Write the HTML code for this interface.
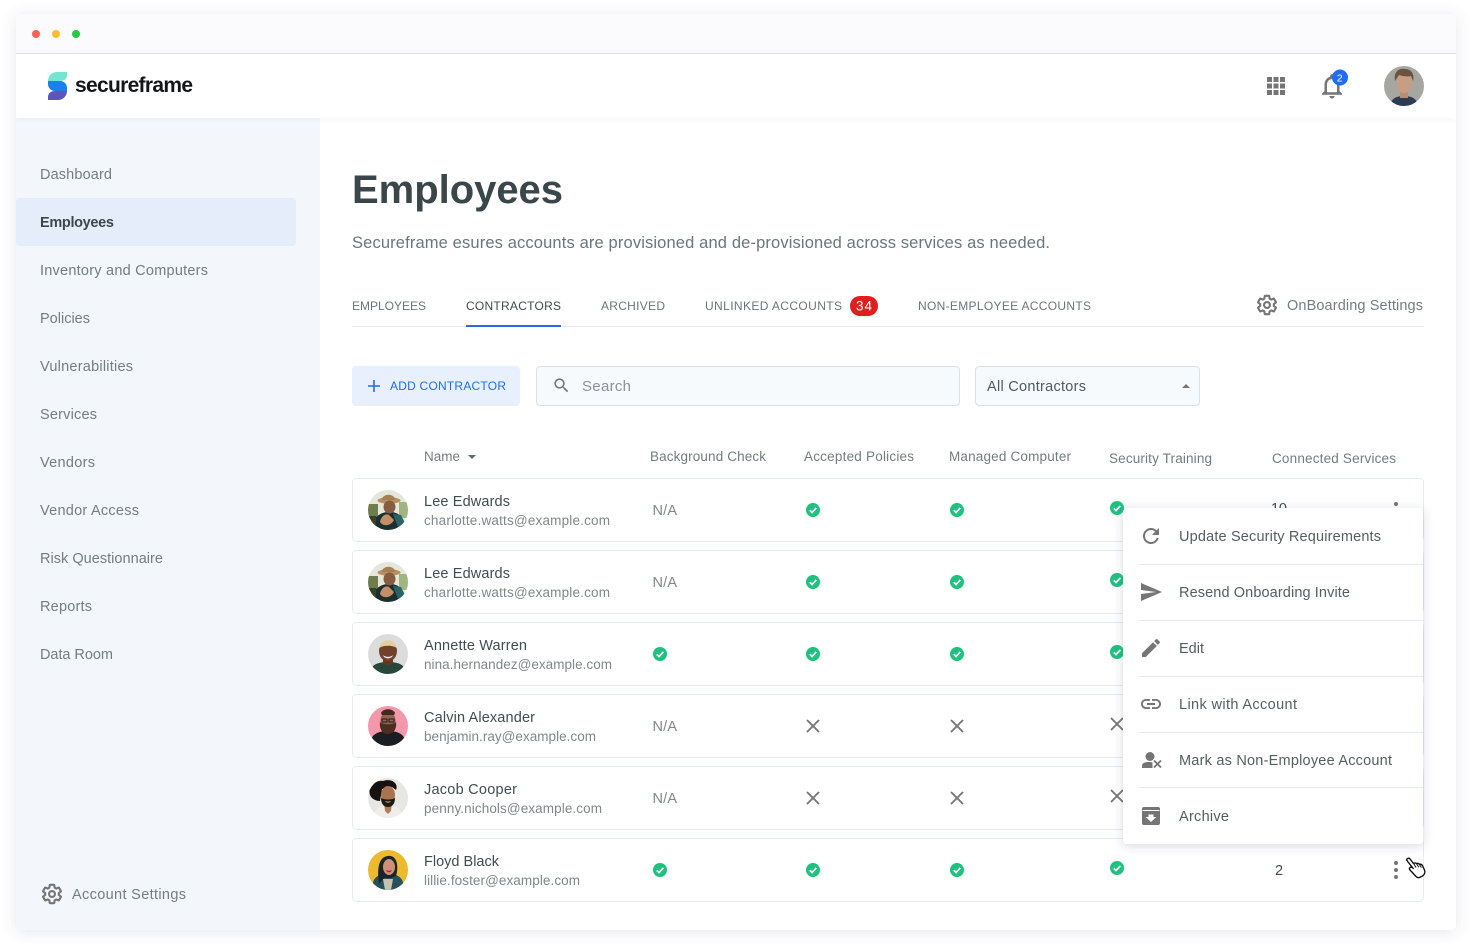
<!DOCTYPE html>
<html lang="en"><head><meta charset="utf-8"><title>Secureframe Employees</title>
<style>
html,body{margin:0;padding:0;background:#fff;width:1472px;height:948px;overflow:hidden}
svg{display:block}
text{font-family:"Liberation Sans",sans-serif}
.nav{font-size:14.5px;fill:#747d80}
.tab{font-size:12px;fill:#6b7578}
.th{font-size:13.5px;fill:#737c7f}
.nm{font-size:14.5px;fill:#414c4f}
.em{font-size:13.5px;fill:#7f878a}
.na{font-size:14.5px;fill:#7f878a}
.mi{font-size:14.5px;fill:#535e61}
.ic{fill:#757575}
</style></head><body>
<svg width="1472" height="948" viewBox="0 0 1472 948" xmlns="http://www.w3.org/2000/svg">
<defs>
<filter id="ws" x="-5%" y="-5%" width="110%" height="110%"><feDropShadow dx="0" dy="2" stdDeviation="7" flood-color="#5a6a90" flood-opacity=".16"/></filter>
<filter id="ps" x="-15%" y="-15%" width="130%" height="130%"><feDropShadow dx="0" dy="2" stdDeviation="5" flood-color="#3a4660" flood-opacity=".2"/></filter>
<filter id="hs" x="-5%" y="-50%" width="110%" height="200%"><feDropShadow dx="0" dy="1" stdDeviation="3" flood-color="#5a6a90" flood-opacity=".07"/></filter>
<clipPath id="av"><circle cx="0" cy="0" r="20"/></clipPath>
<clipPath id="win"><rect x="16" y="14" width="1440" height="916" rx="5"/></clipPath>
<symbol id="chk" viewBox="0 0 14 14" overflow="visible"><circle cx="7" cy="7" r="7" fill="#1ec27f"/><path d="M3.700 7.300l2.300 2.200 4.400-4.600" fill="none" stroke="#fff" stroke-width="1.700"/></symbol>
<symbol id="xx" viewBox="0 0 14 14"><path d="M1 1l12 12M13 1L1 13" stroke="#757575" stroke-width="1.900" fill="none"/></symbol>
<symbol id="gear" viewBox="0 0 24 24"><path d="M19.430 12.980c.04-.32.07-.64.07-.98 0-.34-.03-.66-.07-.98l2.110-1.650c.19-.15.24-.42.12-.64l-2-3.460c-.12-.22-.39-.3-.61-.22l-2.490 1c-.52-.4-1.080-.73-1.690-.98l-.38-2.650C14.460 2.180 14.250 2 14 2h-4c-.25 0-.46.18-.49.42l-.38 2.650c-.61.25-1.170.59-1.690.98l-2.490-1c-.23-.09-.49 0-.61.22l-2 3.460c-.13.22-.07.49.12.64l2.110 1.650c-.04.32-.07.65-.07.98 0 .33.03.66.07.98l-2.110 1.650c-.19.15-.24.42-.12.64l2 3.460c.12.22.39.3.61.22l2.490-1c.52.4 1.080.73 1.690.98l.38 2.650c.03.24.24.42.49.42h4c.25 0 .46-.18.49-.42l.38-2.650c.61-.25 1.170-.59 1.690-.98l2.490 1c.23.09.49 0 .61-.22l2-3.460c.12-.22.07-.49-.12-.64l-2.110-1.650z" fill="none" stroke="#757575" stroke-width="2.300"/><circle cx="12" cy="12" r="3.200" fill="none" stroke="#757575" stroke-width="2.300"/></symbol>
<g id="a1" clip-path="url(#av)"><rect x="-20" y="-20" width="40" height="40" fill="#e4e7da"/><rect x="-20" y="-6" width="10" height="20" fill="#6f7d4c"/><rect x="11" y="-8" width="9" height="16" fill="#9fb681"/><path d="M-16 20c0-12 7-17 15-18 10-1 18 4 19 18z" fill="#1b2e30"/><path d="M5 4l8 1 4 9-7 3z" fill="#2b6268"/><ellipse cx="1" cy="-9.500" rx="11.500" ry="3.200" fill="#b68f62"/><path d="M-6-10c0-7 13-7 13 0z" fill="#a87f52"/><ellipse cx="1.500" cy="-3" rx="6" ry="6.500" fill="#875c40"/><path d="M-8 12c1-6 6-9 9-7l5 5c-3 6-11 7-14 2z" fill="#c48f66"/><path d="M-19 6h7v14h-7z" fill="#3a3f2c"/></g>
<g id="a2" clip-path="url(#av)"><rect x="-20" y="-20" width="40" height="40" fill="#dcdcdc"/><path d="M-18 20c0-9 7-12 18-12s18 3 18 12z" fill="#28473a"/><path d="M-5 2h10v7c-3 3-7 3-10 0z" fill="#62361f"/><ellipse cx="0" cy="-3" rx="9" ry="10.500" fill="#71412a"/><path d="M-8.500-6c0-10 17-10 17 0-3-3-14-3-17 0z" fill="#e4cf9f"/><path d="M-5 1c2 2.500 8 2.500 10 0-1 4.500-9 4.500-10 0z" fill="#fff"/></g>
<g id="a3" clip-path="url(#av)"><rect x="-20" y="-20" width="40" height="40" fill="#f597aa"/><path d="M-18 20c0-12 8-15 18-15s18 3 18 15z" fill="#1c1d22"/><ellipse cx="0" cy="-5" rx="7.500" ry="10" fill="#96644d"/><path d="M-8-4c2 3 14 3 16 0 1 6-2 12-8 12s-9-6-8-12z" fill="#4b2e22"/><path d="M-7-13c2-5 12-5 14 0l-1 2H-6z" fill="#3f2a20"/><path d="M-6-7h5v3h-5zM1-7h5v3H1z" fill="none" stroke="#1c1d22" stroke-width="1"/></g>
<g id="a4" clip-path="url(#av)"><rect x="-20" y="-20" width="40" height="40" fill="#e6e6e3"/><path d="M-14 20c0-10 6-12 14-12s14 2 14 12z" fill="#f1eee9"/><path d="M-4 5h8l-1 8-3 3-3-3z" fill="#b07d5e"/><path d="M-18-3c-3-10 7-15 13-14 8-3 16 2 13 9l-4-3-10 2-2 12c-5 0-9-3-10-6z" fill="#17120f"/><ellipse cx="0" cy="-3" rx="7" ry="9" fill="#a9734f"/><path d="M-7 0c3 2 11 2 14 0 0 6-3 9-7 9s-7-3-7-9z" fill="#241812"/><path d="M-3 3c2 1 4 1 6 0-1 2-5 2-6 0z" fill="#fff"/></g>
<g id="a5" clip-path="url(#av)"><rect x="-20" y="-20" width="40" height="40" fill="#edb92f"/><path d="M-16 20c0-12 5-16 16-16s16 4 16 16z" fill="#26505e"/><path d="M-9 14c-2-14-1-27 9-28 9-1 11 10 8 20l-5 2H-4z" fill="#1b2429"/><ellipse cx="1" cy="-3" rx="6" ry="8" fill="#cd8f76"/><path d="M-2 0c2 1 4 1 6 0-1 3-5 3-6 0z" fill="#a8242f"/><path d="M-5 9h10l-2 11h-6z" fill="#c7c3b3"/></g>
</defs>

<rect x="16" y="14" width="1440" height="916" rx="5" fill="#fff" filter="url(#ws)"/>
<g clip-path="url(#win)">
<rect x="16" y="14" width="1440" height="39" fill="#fbfbfe"/>
<rect x="16" y="53" width="1440" height="1" fill="#e4e4f1"/>
<rect x="16" y="118" width="304" height="812" fill="#f3f6fb"/>
<rect x="16" y="54" width="1440" height="64" fill="#fff" filter="url(#hs)"/>
</g>
<circle cx="36" cy="34" r="4" fill="#ff5f57"/><circle cx="56" cy="34" r="4" fill="#ffbd2e"/><circle cx="76" cy="34" r="4" fill="#28c940"/>

<path d="M67 72v3c0 4-3 6-7 6H48c0-5 4-9 9-9z" fill="#72e6d2"/>
<path d="M48 81h12c4 0 7 3 7 7v3H55c-4 0-7-3-7-7z" fill="#1c80e9"/>
<path d="M48 100v-3c0-4 3-6 7-6h12c0 5-4 9-9 9z" fill="#5b55bc"/>
<text x="75" y="92" font-size="21" font-weight="700" fill="#14171a" textLength="118">secureframe</text>

<g fill="#757575"><rect x="1267" y="77" width="5" height="5"/><rect x="1273.500" y="77" width="5" height="5"/><rect x="1280" y="77" width="5" height="5"/><rect x="1267" y="83.500" width="5" height="5"/><rect x="1273.500" y="83.500" width="5" height="5"/><rect x="1280" y="83.500" width="5" height="5"/><rect x="1267" y="90" width="5" height="5"/><rect x="1273.500" y="90" width="5" height="5"/><rect x="1280" y="90" width="5" height="5"/></g>
<svg x="1317" y="71" width="30" height="30" viewBox="0 0 24 24"><path class="ic" d="M12 22c1.100 0 2-.9 2-2h-4c0 1.100.9 2 2 2zm6-6v-5c0-3.070-1.630-5.640-4.500-6.320V4c0-.83-.67-1.500-1.500-1.500s-1.500.67-1.500 1.500v.68C7.640 5.360 6 7.920 6 11v5l-2 2v1h16v-1l-2-2zm-2 1H8v-6c0-2.480 1.510-4.500 4-4.500s4 2.020 4 4.500v6z"/></svg>
<circle cx="1340" cy="77.500" r="8" fill="#1f6cf2"/>
<text x="1336.800" y="81.500" font-size="10.500" fill="#fff" textLength="6.500">2</text>
<g transform="translate(1404 86)"><g clip-path="url(#av)"><rect x="-20" y="-20" width="40" height="40" fill="#a7a7a2"/><path d="M-14 20c1-8 7-10 14-10s13 2 14 10z" fill="#2c3c52"/><rect x="-4" y="3" width="8" height="9" fill="#b98c74"/><ellipse cx="0" cy="-3" rx="7.500" ry="10" fill="#c99c84"/><path d="M-9-5c-2-11 6-13 10-12 6 0 10 5 8 12l-2-5c-4 1-9 0-12-1z" fill="#6b5341"/></g></g>

<text class="nav" x="40" y="179" textLength="72">Dashboard</text>
<rect x="16" y="198" width="280" height="48" rx="3" fill="#e6edfa"/>
<text x="40" y="227" font-size="14.500" font-weight="700" fill="#3c474a" textLength="74">Employees</text>
<text class="nav" x="40" y="275" textLength="168">Inventory and Computers</text>
<text class="nav" x="40" y="323" textLength="50">Policies</text>
<text class="nav" x="40" y="371" textLength="93">Vulnerabilities</text>
<text class="nav" x="40" y="419" textLength="57">Services</text>
<text class="nav" x="40" y="467" textLength="55">Vendors</text>
<text class="nav" x="40" y="515" textLength="99">Vendor Access</text>
<text class="nav" x="40" y="563" textLength="123">Risk Questionnaire</text>
<text class="nav" x="40" y="611" textLength="52">Reports</text>
<text class="nav" x="40" y="659" textLength="73">Data Room</text>
<text class="nav" x="72" y="899" textLength="114">Account Settings</text>
<use href="#gear" x="41" y="883" width="22" height="22"/>

<text x="352" y="203" font-size="40" font-weight="700" fill="#3a4649" textLength="211">Employees</text>
<text x="352" y="248" font-size="16.500" fill="#6c767a" textLength="698">Secureframe esures accounts are provisioned and de-provisioned across services as needed.</text>

<rect x="352" y="326" width="1072" height="1" fill="#e5ebf6"/>
<text class="tab" x="352" y="310" textLength="74">EMPLOYEES</text>
<text class="tab" x="466" y="310" style="fill:#3f4a4d" textLength="95">CONTRACTORS</text>
<rect x="466" y="325" width="95" height="2" fill="#1f6cf2"/>
<text class="tab" x="601" y="310" textLength="64">ARCHIVED</text>
<text class="tab" x="705" y="310" textLength="137">UNLINKED ACCOUNTS</text>
<rect x="850" y="296" width="28" height="20" rx="10" fill="#e01e1e"/>
<text x="856" y="310.500" font-size="13.500" fill="#fff" textLength="16">34</text>
<text class="tab" x="918" y="310" textLength="173">NON-EMPLOYEE ACCOUNTS</text>
<use href="#gear" x="1256" y="294" width="22" height="22"/>
<text class="nav" x="1287" y="310" textLength="136">OnBoarding Settings</text>

<rect x="352" y="366" width="168" height="40" rx="4" fill="#e9f0fd"/>
<path d="M368 386h12M374 380v12" stroke="#1f6cf2" stroke-width="1.600"/>
<text x="390" y="390" font-size="12" fill="#1f6cf2" textLength="116">ADD CONTRACTOR</text>
<rect x="536.500" y="366.500" width="423" height="39" rx="3.500" fill="#f7fafc" stroke="#d9e0ea"/>
<svg x="552" y="376" width="19" height="19" viewBox="0 0 24 24"><path class="ic" d="M15.500 14h-.79l-.28-.27C15.410 12.590 16 11.110 16 9.500 16 5.910 13.090 3 9.500 3S3 5.910 3 9.500 5.910 16 9.500 16c1.610 0 3.090-.59 4.230-1.570l.27.28v.79l5 4.990L20.490 19l-4.990-5zm-6 0C7.010 14 5 11.990 5 9.500S7.010 5 9.500 5 14 7.010 14 9.500 11.990 14 9.500 14z"/></svg>
<text x="582" y="391" font-size="15" fill="#8b9396" textLength="49">Search</text>
<rect x="975.500" y="366.500" width="224" height="39" rx="3.500" fill="#f7fafc" stroke="#d9e0ea"/>
<text x="987" y="391" font-size="14.500" fill="#4f5a5d" textLength="99">All Contractors</text>
<path d="M1182 388l4-4 4 4z" fill="#757575"/>

<text class="th" x="424" y="461" textLength="36">Name</text>
<path d="M468 455h8l-4 4z" fill="#606a6d"/>
<text class="th" x="650" y="461" textLength="116">Background Check</text>
<text class="th" x="804" y="461" textLength="110">Accepted Policies</text>
<text class="th" x="949" y="461" textLength="122">Managed Computer</text>
<text class="th" x="1109" y="463" textLength="103">Security Training</text>
<text class="th" x="1272" y="463" textLength="124">Connected Services</text>

<g fill="#fff" stroke="#e5ebf5">
<rect x="352.500" y="478.500" width="1071" height="63" rx="4"/>
<rect x="352.500" y="550.500" width="1071" height="63" rx="4"/>
<rect x="352.500" y="622.500" width="1071" height="63" rx="4"/>
<rect x="352.500" y="694.500" width="1071" height="63" rx="4"/>
<rect x="352.500" y="766.500" width="1071" height="63" rx="4"/>
<rect x="352.500" y="838.500" width="1071" height="63" rx="4"/>
</g>

<use href="#a1" transform="translate(388 510)"/>
<use href="#a1" transform="translate(388 582)"/>
<use href="#a2" transform="translate(388 654)"/>
<use href="#a3" transform="translate(388 726)"/>
<use href="#a4" transform="translate(388 798)"/>
<use href="#a5" transform="translate(388 870)"/>

<text class="nm" x="424" y="506" textLength="86">Lee Edwards</text>
<text class="em" x="424" y="525" textLength="186">charlotte.watts@example.com</text>
<text class="nm" x="424" y="578" textLength="86">Lee Edwards</text>
<text class="em" x="424" y="597" textLength="186">charlotte.watts@example.com</text>
<text class="nm" x="424" y="650" textLength="103">Annette Warren</text>
<text class="em" x="424" y="669" textLength="188">nina.hernandez@example.com</text>
<text class="nm" x="424" y="722" textLength="111">Calvin Alexander</text>
<text class="em" x="424" y="741" textLength="172">benjamin.ray@example.com</text>
<text class="nm" x="424" y="794" textLength="93">Jacob Cooper</text>
<text class="em" x="424" y="813" textLength="178">penny.nichols@example.com</text>
<text class="nm" x="424" y="866" textLength="75">Floyd Black</text>
<text class="em" x="424" y="885" textLength="156">lillie.foster@example.com</text>

<text class="na" x="652.500" y="515" textLength="24.500">N/A</text>
<text class="na" x="652.500" y="587" textLength="24.500">N/A</text>
<use href="#chk" x="653" y="647" width="14" height="14"/>
<text class="na" x="652.500" y="731" textLength="24.500">N/A</text>
<text class="na" x="652.500" y="803" textLength="24.500">N/A</text>
<use href="#chk" x="653" y="863" width="14" height="14"/>

<use href="#chk" x="806" y="503" width="14" height="14"/><use href="#chk" x="950" y="503" width="14" height="14"/><use href="#chk" x="1110" y="501" width="14" height="14"/>
<use href="#chk" x="806" y="575" width="14" height="14"/><use href="#chk" x="950" y="575" width="14" height="14"/><use href="#chk" x="1110" y="573" width="14" height="14"/>
<use href="#chk" x="806" y="647" width="14" height="14"/><use href="#chk" x="950" y="647" width="14" height="14"/><use href="#chk" x="1110" y="645" width="14" height="14"/>
<use href="#xx" x="806" y="719" width="14" height="14"/><use href="#xx" x="950" y="719" width="14" height="14"/><use href="#xx" x="1110" y="717" width="14" height="14"/>
<use href="#xx" x="806" y="791" width="14" height="14"/><use href="#xx" x="950" y="791" width="14" height="14"/><use href="#xx" x="1110" y="789" width="14" height="14"/>
<use href="#chk" x="806" y="863" width="14" height="14"/><use href="#chk" x="950" y="863" width="14" height="14"/><use href="#chk" x="1110" y="861" width="14" height="14"/>

<text class="nm" x="1271" y="513" textLength="16">10</text>
<circle cx="1396" cy="504" r="2" fill="#757575"/>
<text class="nm" x="1275" y="875" textLength="8.500">2</text>
<circle cx="1396" cy="863" r="2" fill="#757575"/><circle cx="1396" cy="870" r="2" fill="#757575"/><circle cx="1396" cy="877" r="2" fill="#757575"/>

<rect x="1123" y="508" width="300" height="336" rx="4" fill="#fff" filter="url(#ps)"/>
<g fill="#e5ebf6"><rect x="1139" y="564" width="284" height="1"/><rect x="1139" y="620" width="284" height="1"/><rect x="1139" y="676" width="284" height="1"/><rect x="1139" y="732" width="284" height="1"/><rect x="1139" y="787" width="284" height="1"/></g>
<text class="mi" x="1179" y="541" textLength="202">Update Security Requirements</text>
<text class="mi" x="1179" y="597" textLength="171">Resend Onboarding Invite</text>
<text class="mi" x="1179" y="653" textLength="25">Edit</text>
<text class="mi" x="1179" y="709" textLength="118">Link with Account</text>
<text class="mi" x="1179" y="765" textLength="213">Mark as Non-Employee Account</text>
<text class="mi" x="1179" y="821" textLength="50">Archive</text>

<svg x="1139" y="524" width="24" height="24" viewBox="0 0 24 24"><path class="ic" d="M17.650 6.350C16.200 4.900 14.210 4 12 4c-4.420 0-7.990 3.580-7.990 8s3.570 8 7.990 8c3.730 0 6.840-2.550 7.730-6h-2.080c-.82 2.330-3.040 4-5.650 4-3.310 0-6-2.690-6-6s2.690-6 6-6c1.660 0 3.140.69 4.220 1.780L13 11h7V4l-2.350 2.350z"/></svg>
<svg x="1139" y="580" width="24" height="24" viewBox="0 0 24 24"><path class="ic" d="M2.010 21L23 12 2.010 3 2 10l15 2-15 2z"/></svg>
<svg x="1139" y="636" width="24" height="24" viewBox="0 0 24 24"><path class="ic" d="M3 17.250V21h3.750L17.810 9.940l-3.750-3.750L3 17.250zM20.710 7.040c.39-.39.39-1.020 0-1.410l-2.340-2.340c-.39-.39-1.020-.39-1.410 0l-1.830 1.830 3.750 3.750 1.830-1.830z"/></svg>
<svg x="1139" y="692" width="24" height="24" viewBox="0 0 24 24"><path class="ic" d="M3.900 12c0-1.710 1.390-3.100 3.100-3.100h4V7H7c-2.760 0-5 2.240-5 5s2.240 5 5 5h4v-1.900H7c-1.710 0-3.100-1.390-3.100-3.100zM8 13h8v-2H8v2zm9-6h-4v1.900h4c1.710 0 3.100 1.390 3.100 3.100s-1.390 3.100-3.100 3.100h-4V17h4c2.760 0 5-2.240 5-5s-2.240-5-5-5z"/></svg>
<circle cx="1150" cy="756.500" r="4.500" fill="#757575"/><path d="M1142 768v-2.500c0-2.500 3-3.500 7-3.500 1.500 0 2.500.2 3.500.5v5.500z" fill="#757575"/><path d="M1154 760.500l7 7M1161 760.500l-7 7" stroke="#757575" stroke-width="1.800"/>
<path class="ic" d="M1144 807h14a2 2 0 0 1 2 2v14a2 2 0 0 1-2 2h-14a2 2 0 0 1-2-2v-14a2 2 0 0 1 2-2z"/>
<path d="M1142.500 810.500h17" stroke="#fff" stroke-width="1"/>
<path d="M1148.500 814.500h5v2.500h2.800l-5.300 5-5.300-5h2.800z" fill="#fff"/>

<g transform="translate(1405 857)"><path d="M1.500 3C2.200 1 4 .8 5 2L8.600 6.600C9.600 5.600 11 5.800 11.600 6.800 12.600 6 14 6.300 14.500 7.400 15.600 6.900 16.800 7.300 17.300 8.400L19.500 13C20.400 15.500 19.600 17.500 17.500 19L15 20.300C13.500 21 12 20.600 11 19.500L5 13C4.200 12 4.400 11 5 10.500 5.700 9.900 6.600 10 7.400 10.700L8.200 11.400Z" fill="#fff" stroke="#111" stroke-width="1.400" stroke-linejoin="round"/><path d="M9 7l2 3.500M11.800 7l2 3.300M14.600 7.600l1.800 3" stroke="#111" stroke-width="1" fill="none"/></g>
</svg>
</body></html>
